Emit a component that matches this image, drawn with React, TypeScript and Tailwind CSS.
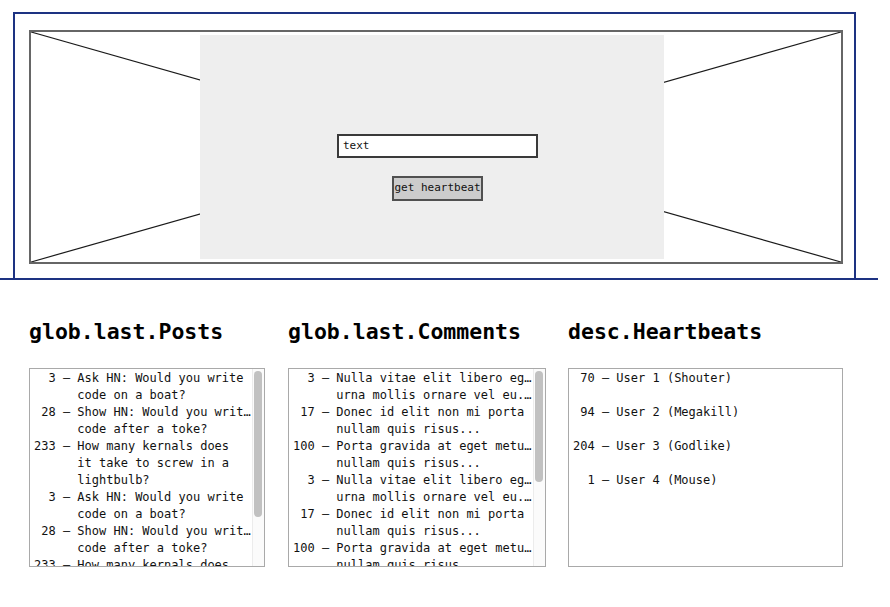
import { type ReactNode } from "react";

type Entry = {
  n: number;
  lines: string[];
};

const posts: Entry[] = [
  { n: 3, lines: ["Ask HN: Would you write", "code on a boat?"] },
  { n: 28, lines: ["Show HN: Would you writ…", "code after a toke?"] },
  { n: 233, lines: ["How many kernals does", "it take to screw in a", "lightbulb?"] },
  { n: 3, lines: ["Ask HN: Would you write", "code on a boat?"] },
  { n: 28, lines: ["Show HN: Would you writ…", "code after a toke?"] },
  { n: 233, lines: ["How many kernals does", "it take to screw in a", "lightbulb?"] },
];

const comments: Entry[] = [
  { n: 3, lines: ["Nulla vitae elit libero eg…", "urna mollis ornare vel eu.…"] },
  { n: 17, lines: ["Donec id elit non mi porta", "nullam quis risus..."] },
  { n: 100, lines: ["Porta gravida at eget metu…", "nullam quis risus..."] },
  { n: 3, lines: ["Nulla vitae elit libero eg…", "urna mollis ornare vel eu.…"] },
  { n: 17, lines: ["Donec id elit non mi porta", "nullam quis risus..."] },
  { n: 100, lines: ["Porta gravida at eget metu…", "nullam quis risus..."] },
];

const heartbeats: Entry[] = [
  { n: 70, lines: ["User 1 (Shouter)"] },
  { n: 94, lines: ["User 2 (Megakill)"] },
  { n: 204, lines: ["User 3 (Godlike)"] },
  { n: 1, lines: ["User 4 (Mouse)"] },
];

const mono = "font-['DejaVu_Sans_Mono','Liberation_Mono',monospace]";

const Row = ({ entry, spaced }: { entry: Entry; spaced?: boolean }) => (
  <div className={spaced ? "flex mb-[17px]" : "flex"}>
    <span className="w-[3ch] shrink-0 text-right">{entry.n}</span>
    <span className="w-[3ch] shrink-0 text-center">–</span>
    <div className="min-w-0 flex-1">
      {entry.lines.map((line, i) => (
        <div key={i} className="whitespace-nowrap overflow-hidden">
          {line}
        </div>
      ))}
    </div>
  </div>
);

const Scrollbar = ({ thumb }: { thumb: string }) => (
  <div className="w-[12px] shrink-0 border-l border-[#ececec] bg-[#fbfbfb] pt-[2px] pl-[1px]">
    <div className={`w-[8px] rounded-full bg-[#c1c1c1] ${thumb}`} />
  </div>
);

const Column = ({
  title,
  width,
  children,
  scroll,
}: {
  title: string;
  width: string;
  children: ReactNode;
  scroll?: ReactNode;
}) => (
  <section className={width}>
    <h2 className={`${mono} text-[21.5px] font-bold leading-[25px] text-black`}>
      {title}
    </h2>
    <div className="mt-[24px] flex h-[199px] overflow-hidden border border-[#a9a9a9] bg-white">
      <div
        className={`${mono} min-w-0 flex-1 overflow-hidden pl-[4px] pt-[1px] text-[12px] leading-[17px] text-[#111]`}
      >
        {children}
      </div>
      {scroll}
    </div>
  </section>
);

export default function App() {
  return (
    <div className="min-h-[607px] w-[890px] bg-white">
      <header className="w-[878px] border-b-2 border-[#1d3282] pt-[12px]">
        <div className="ml-[13px] h-[266px] w-[843px] border-x-2 border-t-2 border-[#1d3282] pl-[14px] pt-[16px]">
          <div className="relative h-[234px] w-[814px] border-2 border-[#666666]">
            <svg className="absolute inset-0 h-full w-full" aria-hidden="true">
              <line x1="0" y1="0" x2="100%" y2="100%" stroke="#1a1a1a" strokeWidth="1.2" />
              <line x1="0" y1="100%" x2="100%" y2="0" stroke="#1a1a1a" strokeWidth="1.2" />
            </svg>
            <div className="relative ml-[169px] mt-[3px] h-[224px] w-[464px] bg-[#eeeeee] pl-[137px] pt-[99px]">
              <div
                className={`flex h-[24px] w-[201px] items-center border-2 border-[#3a3a3a] bg-white px-[4px] text-[11px] text-[#111] ${mono}`}
              >
                text
              </div>
              <button
                type="button"
                className={`ml-[55px] mt-[18px] flex h-[25px] w-[91px] items-center justify-center border-2 border-[#505050] bg-[#cccccc] text-[11px] text-[#111] ${mono}`}
              >
                get heartbeat
              </button>
            </div>
          </div>
        </div>
      </header>

      <main className="ml-[29px] mt-[39px] flex">
        <Column
          title="glob.last.Posts"
          width="w-[236px]"
          scroll={<Scrollbar thumb="h-[146px]" />}
        >
          {posts.map((p, i) => (
            <Row key={i} entry={p} />
          ))}
        </Column>
        <div className="w-[23px] shrink-0" />
        <Column
          title="glob.last.Comments"
          width="w-[258px]"
          scroll={<Scrollbar thumb="h-[111px]" />}
        >
          {comments.map((c, i) => (
            <Row key={i} entry={c} />
          ))}
        </Column>
        <div className="w-[22px] shrink-0" />
        <Column title="desc.Heartbeats" width="w-[275px]">
          {heartbeats.map((h, i) => (
            <Row key={i} entry={h} spaced />
          ))}
        </Column>
      </main>
    </div>
  );
}
